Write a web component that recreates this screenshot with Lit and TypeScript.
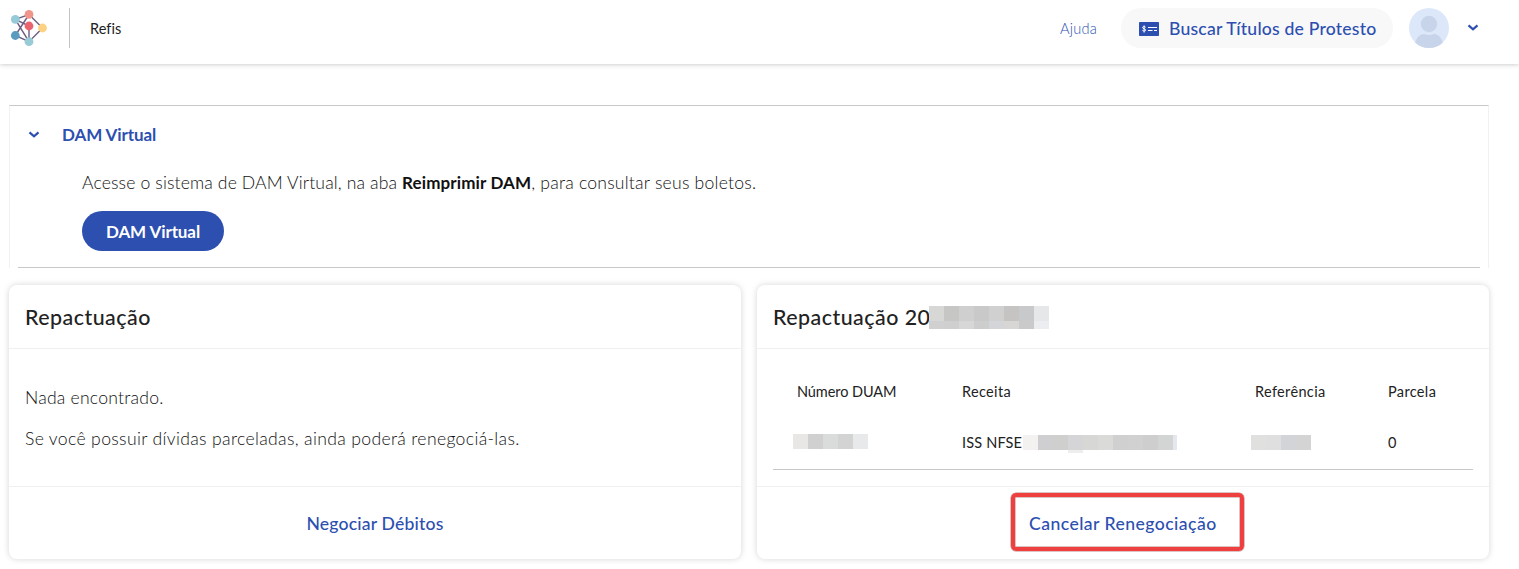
import { LitElement, html, css, svg } from "lit";
import { customElement, property } from "lit/decorators.js";

type Cell = [number, number, number, number, string];

const row = (colors: string[], y = 0, h = 15): Cell[] =>
  colors.map((c, i) => [i * 15, y, 15, h, c] as Cell);

const titleCells: Cell[] = [
  ...row(["#d7d7d6", "#c6c6c5", "#cfcfd0", "#c9c9ca", "#d0d0d1", "#c5c4c2", "#c8c9cb", "#e5e7e9"]),
  ...row(["#d0d0d0", "#cfcfcf", "#d7d7d8", "#cdcdcd", "#d3d5d8", "#d7d6d4", "#cacaca", "#ecedf0"], 15, 8),
];
const duamCells = row(["#e8e7e6", "#d0d0d1", "#d9dcdb", "#d3d3d4", "#e8e9eb"]);
const receitaCells: Cell[] = [
  ...row(["#f3f2f1", "#cfcfd2", "#cfcfce", "#d5d5d8", "#d7d7d6", "#dadad9", "#cfd0cf", "#d1d1d1", "#cecece", "#d3d4d4"]),
  [150, 0, 4, 15, "#e5e7ef"],
  [45, 15, 15, 3, "#eeeeee"],
];
const referenciaCells = row(["#e0e0de", "#dfdfdf", "#d2d4d7", "#d4d4d4"]);

@customElement("mosaic-mask")
class MosaicMask extends LitElement {
  @property({ attribute: false }) cells: Cell[] = [];
  static styles = css`
    :host { display: block; flex: none; }
    svg { display: block; }
  `;
  render() {
    const w = Math.max(...this.cells.map((c) => c[0] + c[2]));
    const h = Math.max(...this.cells.map((c) => c[1] + c[3]));
    return html`<svg width=${w} height=${h} shape-rendering="crispEdges">
      ${this.cells.map(([x, y, cw, ch, c]) => svg`<rect x=${x} y=${y} width=${cw} height=${ch} fill=${c}></rect>`)}
    </svg>`;
  }
}

const chevron = html`<svg width="12" height="8" viewBox="0 0 12 8" fill="none" stroke="#2c4fb0" stroke-width="2.2">
  <path d="M1.5 1.4 6 5.4 10.5 1.4"></path>
</svg>`;

@customElement("app-root")
class AppRoot extends LitElement {
  static styles = css`
    :host {
      display: block;
      height: 569px;
      overflow: hidden;
      background: #fff;
      color: #222;
      font: 300 17.6px/24px Lato, sans-serif;
      white-space: nowrap;
    }
    * { box-sizing: border-box; }
    svg { display: block; flex: none; }
    .blue { color: #2c4fb0; }

    .bar { display: flex; align-items: center; height: 64px; padding: 0 40px 8px 10px; box-shadow: 0 0 5px rgba(0, 0, 0, 0.28); }
    .sep { width: 1px; height: 40px; background: #c4c4c4; margin: 0 20px 0 21px; }
    .refis { font-size: 14.5px; font-weight: 400; letter-spacing: 0.05px; padding-top: 1px; }
    .grow { flex: 1; }
    .ajuda { font-size: 14.6px; letter-spacing: 0.25px; padding-top: 2px; width: 61px; }
    .pill { display: flex; align-items: center; width: 272px; height: 40px; border-radius: 20px; background: #f8f8f8; padding: 2px 0 0 18px; gap: 10px; margin-right: 16px; font-weight: 500; letter-spacing: 0.2px; }
    .avatar { margin-right: 18px; }

    main { padding: 41px 30px 0 9px; }
    .panel { height: 163px; width: 1480px; position: relative; border: 1px solid #f1f1f1; border-top-color: #c8c8c8; border-bottom: 0; padding: 16px 0 0 18px; }
    .underline { position: absolute; left: 8px; right: 8px; bottom: 0; height: 1px; background: #c8c8c8; }
    .summary { display: flex; align-items: center; gap: 22px; height: 26px; font-size: 17px; font-weight: 700; letter-spacing: -0.1px; }
    .detail { padding-left: 54px; }
    .text { margin: 23px 0 16px; height: 24px; display: flex; white-space: pre; color: #111; }
    .a { letter-spacing: 0.13px; }
    .b { font-size: 17px; letter-spacing: 0.12px; font-weight: 700; }
    .c { letter-spacing: 0.22px; }
    .button { display: flex; align-items: center; justify-content: center; width: 142px; height: 40px; border-radius: 20px; background: #2c4fb0; color: #fff; font-size: 17px; font-weight: 700; letter-spacing: -0.1px; padding-top: 2px; }

    .cards { display: grid; grid-template-columns: 732px 732px; gap: 16px; margin-top: 17px; }
    .card { display: flex; flex-direction: column; height: 274px; border-radius: 8px; box-shadow: 0 0 6px rgba(0, 0, 0, 0.17); background: #fff; }
    .title { display: flex; align-items: center; height: 64px; padding: 2px 16px 0; border-bottom: 1px solid #f0f0f0; font-size: 21.4px; font-weight: 500; letter-spacing: 0.48px; }
    .name { width: 156px; margin-top: -1px; }
    .body { flex: 1; padding: 0 16px; color: #111; }
    .foot { display: flex; align-items: center; justify-content: center; height: 73px; border-top: 1px solid #f0f0f0; font-weight: 500; padding-top: 2px; }
    .nada { letter-spacing: 0.22px; margin-top: 37px; }
    .voce { letter-spacing: 0.34px; margin-top: 17px; }
    .negociar { letter-spacing: 0.17px; }
    .cancelar { letter-spacing: 0.45px; }
    .focus { display: flex; align-items: center; width: 233px; height: 58px; padding: 3px 0 0 14px; margin: -4px 0 0 9px; border: 4px solid #ef4040; border-radius: 5px; box-shadow: 0 0 0 0.5px #b88, inset 0 0 0 0.5px #b88; }

    .table { margin-top: 16px; border-bottom: 1px solid #c8c8c8; height: 105px; font-size: 14.5px; font-weight: 400; letter-spacing: 0.35px; color: #222; }
    .tr { display: grid; grid-template-columns: 165px 293px 133px 1fr; height: 52px; padding: 14px 0 0 24px; align-items: start; }
    .head { padding-top: 15px; }
    .cell { display: flex; align-items: flex-start; }
    .duam { letter-spacing: -0.08px; }
    .high { margin: 3px 0 0 -4px; }
    .shift { margin: 4px 0 0 -4px; }
    .iss { letter-spacing: 0.17px; width: 61px; }
    .low { margin-top: 4px; }
  `;

  render() {
    return html`
      <header class="bar">
        <svg width="38" height="40" viewBox="10 8 38 40">
          <g stroke="#6b5d80" stroke-width="1.4">
            <path d="M15.3 19.3 29 14.5 42.5 28 29 41.7 15.3 35.5 29 14.5M15.3 19.3 29 26V41.7L15.3 19.3" fill="none"></path>
          </g>
          <circle cx="29" cy="14.4" r="4.4" fill="#f0958b"></circle>
          <circle cx="15.3" cy="19.3" r="4.4" fill="#96cad6"></circle>
          <circle cx="29" cy="26" r="4.4" fill="#e9646f"></circle>
          <circle cx="42.5" cy="28" r="4.4" fill="#fcd182"></circle>
          <circle cx="15.3" cy="35.5" r="4.4" fill="#5b9bc0"></circle>
          <circle cx="29" cy="41.7" r="4.4" fill="#98cbd5"></circle>
        </svg>
        <span class="sep"></span>
        <span class="refis">Refis</span>
        <span class="grow"></span>
        <span class="blue ajuda">Ajuda</span>
        <div class="pill blue">
          <svg width="20" height="14" viewBox="0 0 20 14">
            <rect width="20" height="14" rx="0.8" fill="#2c4fb0"></rect>
            <path d="M9 5.5h9M9 8.5h4.5M15 8.5h3" stroke="#fff" stroke-width="1.1"></path>
            <path d="M6.6 5.2C6.2 4.5 3.5 4.3 3.5 5.6 3.5 7 6.7 6.6 6.7 8.1 6.7 9.4 3.9 9.2 3.4 8.4M5.1 3.4v7.2" fill="none" stroke="#fff" stroke-width="1"></path>
          </svg>
          <span>Buscar Títulos de Protesto</span>
        </div>
        <svg class="avatar" width="40" height="40" viewBox="0 0 40 40">
          <clipPath id="round"><circle cx="20" cy="20" r="20"></circle></clipPath>
          <g clip-path="url(#round)">
            <rect width="40" height="40" fill="#dce8fa"></rect>
            <circle cx="20" cy="16" r="8.2" fill="#c8d4ea"></circle>
            <path d="M6 40V36C7 29 12 25.5 15 26Q20 28 25 26C28 25.5 33 29 34 36V40Z" fill="#c8d4ea"></path>
          </g>
        </svg>
        ${chevron}
      </header>
      <main>
        <section class="panel">
          <div class="summary blue">${chevron}<span>DAM Virtual</span></div>
          <div class="detail">
            <div class="text"><span class="a">Acesse o sistema de DAM Virtual, na aba </span><span class="b">Reimprimir DAM</span><span class="c">, para consultar seus boletos.</span></div>
            <div class="button">DAM Virtual</div>
          </div>
          <div class="underline"></div>
        </section>
        <div class="cards">
          <section class="card">
            <div class="title"><span class="name">Repactuação</span></div>
            <div class="body">
              <div class="nada">Nada encontrado.</div>
              <div class="voce">Se você possuir dívidas parceladas, ainda poderá renegociá-las.</div>
            </div>
            <div class="foot blue negociar">Negociar Débitos</div>
          </section>
          <section class="card">
            <div class="title"><span class="name">Repactuação 20</span><mosaic-mask .cells=${titleCells}></mosaic-mask></div>
            <div class="body">
              <div class="table">
                <div class="tr head">
                  <span class="duam">Número DUAM</span><span>Receita</span><span>Referência</span><span>Parcela</span>
                </div>
                <div class="tr">
                  <mosaic-mask class="high" .cells=${duamCells}></mosaic-mask>
                  <div class="cell"><span class="iss">ISS NFSE</span><mosaic-mask class="low" .cells=${receitaCells}></mosaic-mask></div>
                  <mosaic-mask class="shift" .cells=${referenciaCells}></mosaic-mask>
                  <span>0</span>
                </div>
              </div>
            </div>
            <div class="foot blue cancelar"><div class="focus">Cancelar Renegociação</div></div>
          </section>
        </div>
      </main>
    `;
  }
}
